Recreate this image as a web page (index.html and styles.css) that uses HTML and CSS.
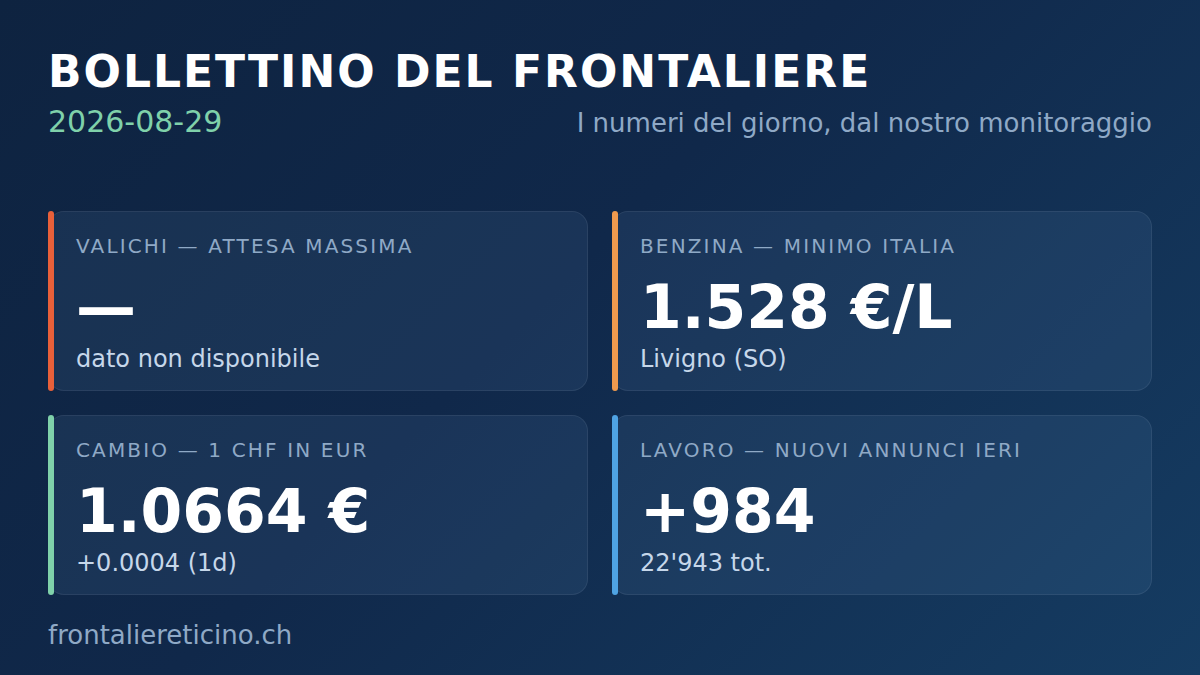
FILE: index.html
```html
<!DOCTYPE html>
<html lang="it">
<head>
<meta charset="utf-8">
<title>Bollettino del frontaliere</title>
<link rel="stylesheet" href="styles.css">
</head>
<body>
<main class="page">
  <header class="head">
    <h1 class="title">BOLLETTINO DEL FRONTALIERE</h1>
    <div class="subrow">
      <span class="date">2026-08-29</span>
      <span class="tagline">I numeri del giorno, dal nostro monitoraggio</span>
    </div>
  </header>
  <section class="grid">
    <article class="card accent-red">
      <div class="label">VALICHI — ATTESA MASSIMA</div>
      <div class="value">—</div>
      <div class="sub">dato non disponibile</div>
    </article>
    <article class="card accent-orange">
      <div class="label">BENZINA — MINIMO ITALIA</div>
      <div class="value">1.528 €/L</div>
      <div class="sub">Livigno (SO)</div>
    </article>
    <article class="card accent-green">
      <div class="label">CAMBIO — 1 CHF IN EUR</div>
      <div class="value">1.0664 €</div>
      <div class="sub">+0.0004 (1d)</div>
    </article>
    <article class="card accent-blue">
      <div class="label">LAVORO — NUOVI ANNUNCI IERI</div>
      <div class="value">+984</div>
      <div class="sub">22'943 tot.</div>
    </article>
  </section>
  <footer class="foot">frontaliereticino.ch</footer>
</main>
</body>
</html>
```
FILE: styles.css
```css
html, body {
  margin: 0;
  padding: 0;
}
body {
  width: 1200px;
  height: 675px;
  overflow: hidden;
  font-family: "DejaVu Sans", Verdana, sans-serif;
  background: linear-gradient(135deg, #0e2340 0%, #10284a 45%, #153c62 100%);
  color: #ffffff;
}
.page {
  box-sizing: border-box;
  height: 675px;
  padding: 46px 48px 0 48px;
  display: flex;
  flex-direction: column;
}
.title {
  margin: 0;
  font-size: 44px;
  line-height: 52px;
  font-weight: bold;
  letter-spacing: 2px;
  color: #ffffff;
}
.subrow {
  display: flex;
  justify-content: space-between;
  align-items: baseline;
  margin-top: 6px;
}
.date {
  font-size: 30px;
  line-height: 36px;
  color: #7fd1aa;
}
.tagline {
  font-size: 26px;
  line-height: 36px;
  color: #8fa9c6;
}
.grid {
  margin-top: 70px;
  display: grid;
  grid-template-columns: 540px 540px;
  grid-auto-rows: 180px;
  gap: 24px;
}
.card {
  position: relative;
  box-sizing: border-box;
  border-radius: 16px;
  border: 1px solid rgba(255, 255, 255, 0.07);
  background: rgba(120, 170, 220, 0.1);
  padding: 22px 20px 0 27px;
  display: flex;
  flex-direction: column;
}
.card::before {
  content: "";
  position: absolute;
  left: -1px;
  top: -1px;
  bottom: -1px;
  width: 6px;
  border-radius: 3px;
}
.accent-red::before { background: #e8603a; }
.accent-orange::before { background: #f09a4e; }
.accent-green::before { background: #7fd1aa; }
.accent-blue::before { background: #4fa3e3; }
.label {
  font-size: 20px;
  line-height: 24px;
  letter-spacing: 2.15px;
  color: #8fa9c6;
}
.value {
  margin-top: 19px;
  font-size: 60px;
  line-height: 60px;
  font-weight: bold;
  color: #ffffff;
}
.sub {
  margin-top: 7px;
  font-size: 24px;
  line-height: 30px;
  color: #c6d7ea;
}
.foot {
  margin-top: 23px;
  font-size: 26px;
  line-height: 34px;
  color: #8fa9c6;
}
```
